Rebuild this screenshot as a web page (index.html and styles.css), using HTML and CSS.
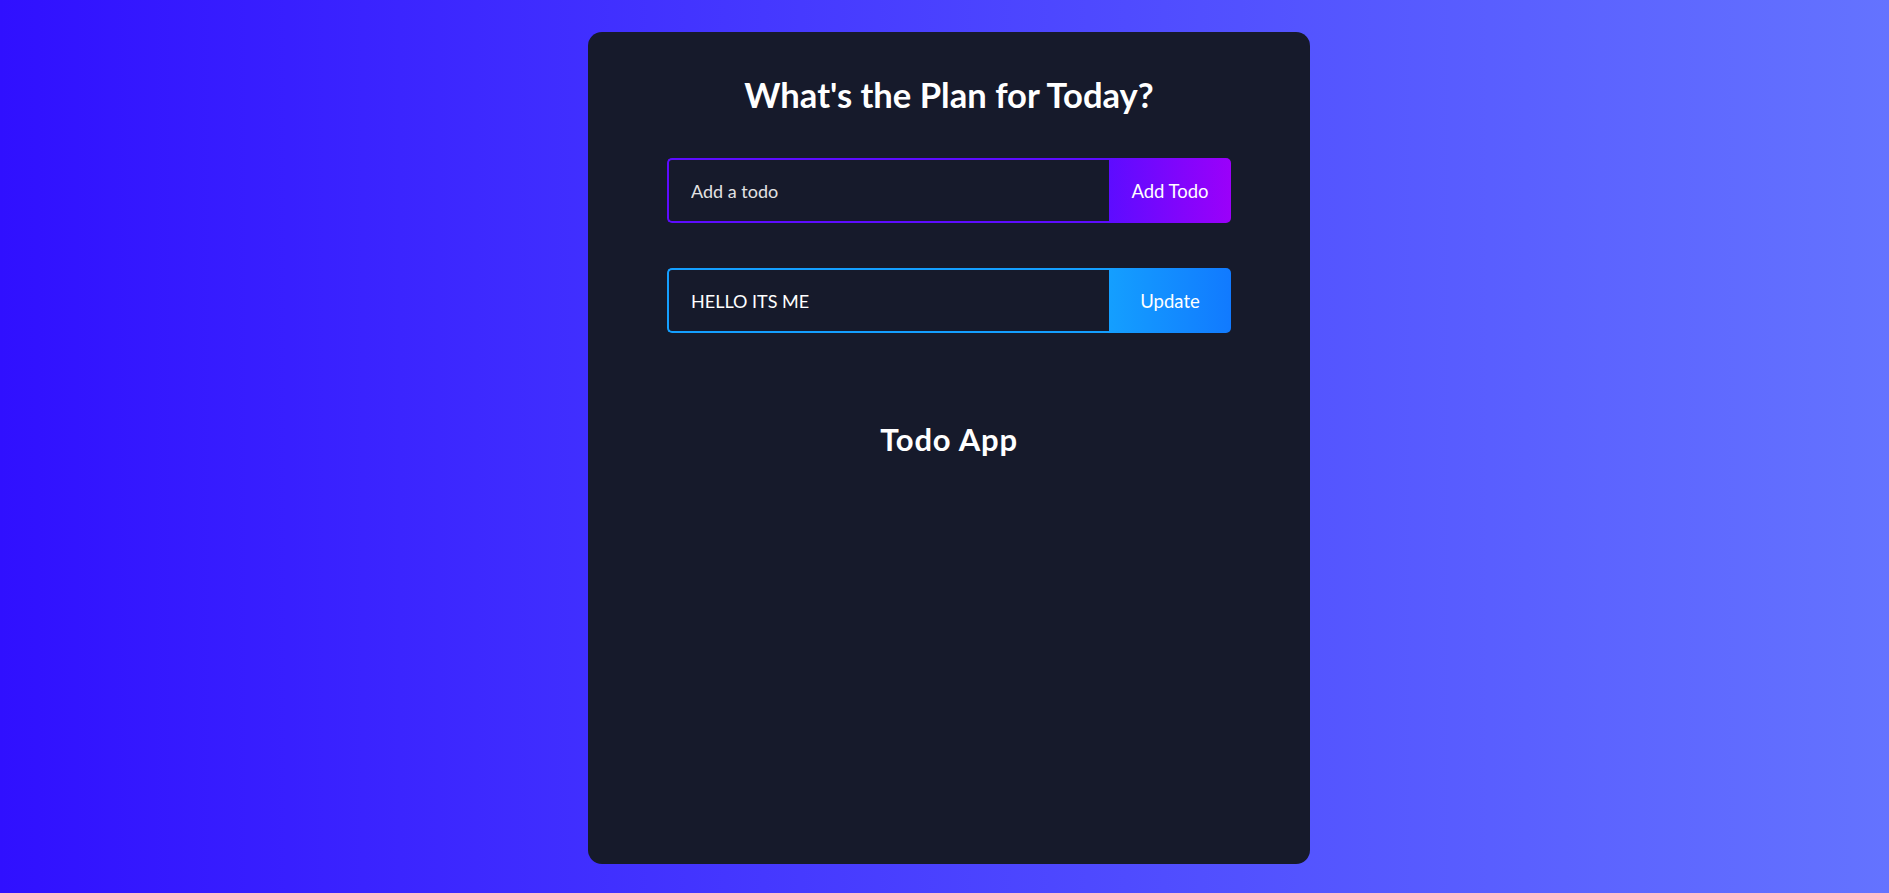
FILE: index.html
```html
<!DOCTYPE html>
<html lang="en">
<head>
<meta charset="utf-8">
<title>Todo App</title>
<link rel="stylesheet" href="styles.css">
</head>
<body>
  <div class="page">
    <div class="todo-app">
      <h1 class="title">What's the Plan for Today?</h1>
      <form class="todo-form">
        <input class="todo-input" type="text" placeholder="Add a todo">
        <button class="todo-button" type="button">Add Todo</button>
      </form>
      <form class="todo-form">
        <input class="todo-input edit" type="text" value="HELLO ITS ME">
        <button class="todo-button edit" type="button">Update</button>
      </form>
      <h2 class="subtitle">Todo App</h2>
    </div>
  </div>
</body>
</html>
```

FILE: styles.css
```css
* {
  box-sizing: border-box;
  margin: 0;
  padding: 0;
}

html, body {
  height: 100%;
}

body {
  font-family: "Lato", "Liberation Sans", sans-serif;
  background: linear-gradient(90deg, rgb(48, 16, 255) 0%, rgb(100, 115, 255) 100%);
  overflow: hidden;
}

.page {
  display: flex;
  justify-content: center;
  align-items: flex-start;
  padding: 32px 0 0 9px;
  min-height: 100vh;
}

.todo-app {
  width: 722px;
  height: 832px;
  background: #161a2b;
  border-radius: 14px;
  display: flex;
  flex-direction: column;
  align-items: center;
  text-align: center;
}

.title {
  margin-top: 43px;
  font-size: 34.6px;
  line-height: 40px;
  font-weight: 700;
  color: #fff;
}

.todo-form {
  display: flex;
  width: 564px;
  height: 65px;
  margin-top: 43px;
}

.todo-form + .todo-form {
  margin-top: 45px;
}

.todo-input {
  flex: 1;
  height: 100%;
  padding: 0 24px 0 22px;
  border: 2px solid #5d0cff;
  border-right: none;
  border-radius: 5px 0 0 5px;
  background: transparent;
  color: #fff;
  font-family: inherit;
  font-size: 18px;
  outline: none;
}

.todo-input::placeholder {
  color: #e2e2e2;
  opacity: 1;
}

.todo-input.edit {
  border-color: #149fff;
}

.todo-button {
  width: 122px;
  height: 100%;
  border: none;
  border-radius: 0 5px 5px 0;
  background: linear-gradient(90deg, rgb(93, 12, 255) 0%, rgb(155, 0, 250) 100%);
  color: #fff;
  font-family: inherit;
  font-size: 18.5px;
  cursor: pointer;
}

.todo-button.edit {
  background: linear-gradient(90deg, rgb(20, 159, 255) 0%, rgb(17, 122, 255) 100%);
}

.subtitle {
  margin-top: 89px;
  font-size: 31px;
  line-height: 35px;
  letter-spacing: 0.8px;
  font-weight: 700;
  color: #fff;
}
```
